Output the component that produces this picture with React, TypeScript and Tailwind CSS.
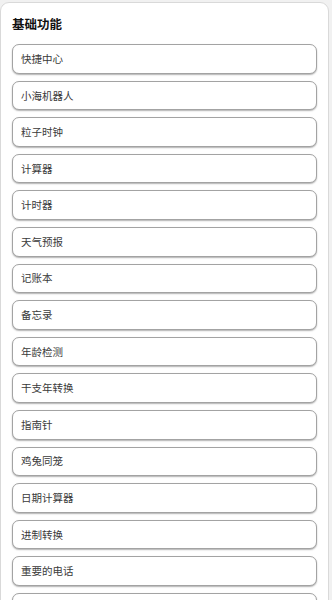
const items = [
  '快捷中心',
  '小海机器人',
  '粒子时钟',
  '计算器',
  '计时器',
  '天气预报',
  '记账本',
  '备忘录',
  '年龄检测',
  '干支年转换',
  '指南针',
  '鸡兔同笼',
  '日期计算器',
  '进制转换',
  '重要的电话',
  '',
]

export default function App() {
  return (
    <div
      className="min-h-screen bg-[#f1f1f1] pt-[2px] pr-[3px]"
      style={{ fontFamily: '"Noto Sans CJK SC", "Noto Sans", sans-serif' }}
    >
      <div className="bg-white border border-[#d9d9d9] rounded-[9px] px-[11px] pt-[12px] pb-4">
        <h1 className="text-[12.5px] leading-[18px] font-bold text-[#111] mb-[11px]">基础功能</h1>
        <div className="flex flex-col gap-[7px]">
          {items.map((name, i) => (
            <div
              key={i}
              className="h-[29.6px] flex items-center pl-[8px] border border-[#a3a3a3] rounded-[7px] bg-white shadow-[0_1px_1.5px_rgba(0,0,0,0.3)] text-[10.5px] text-[#3a3a3a]"
            >
              {name}
            </div>
          ))}
        </div>
      </div>
    </div>
  )
}
